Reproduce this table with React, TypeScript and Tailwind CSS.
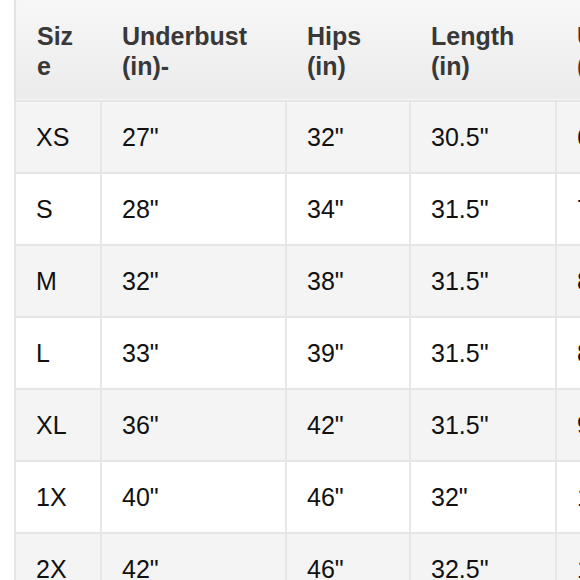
import React from "react";

const headers = [
    ["Siz", "e"],
    ["Underbust", "(in)-"],
    ["Hips", "(in)"],
    ["Length", "(in)"],
    ["Underarm", "(in)"],
];

const rows = [
    ["XS", '27"', '32"', '30.5"', '6"'],
    ["S", '28"', '34"', '31.5"', '7"'],
    ["M", '32"', '38"', '31.5"', '8"'],
    ["L", '33"', '39"', '31.5"', '8"'],
    ["XL", '36"', '42"', '31.5"', '9"'],
    ["1X", '40"', '46"', '32"', '10"'],
    ["2X", '42"', '46"', '32.5"', '10"'],
];

const colWidths = ["w-[86px]", "w-[185px]", "w-[124px]", "w-[146px]", "w-[160px]"];

const App: React.FC = () => {
    return (
        <div className="w-[580px] h-[580px] overflow-hidden bg-white pl-[14px]" style={{ fontFamily: '"Liberation Sans", Arial, sans-serif' }}>
            <table className="table-fixed border-collapse w-[701px] text-[25px]">
                <colgroup>
                    {colWidths.map((w, i) => (
                        <col key={i} className={w} />
                    ))}
                </colgroup>
                <thead>
                    <tr className="h-[101px] bg-gradient-to-b from-[#f7f7f7] to-[#ebebeb] border-l-2 border-b-2 border-[#e3e3e3]">
                        {headers.map((h, i) => (
                            <th key={i} className="text-left align-middle font-bold text-[#383838] leading-[30px] pl-[21px] pt-[2px]">
                                <div className="whitespace-nowrap">{h[0]}</div>
                                <div className="whitespace-nowrap">{h[1]}</div>
                            </th>
                        ))}
                    </tr>
                </thead>
                <tbody>
                    {rows.map((r, ri) => (
                        <tr key={ri} className={ri % 2 === 0 ? "h-[72px] bg-[#f4f4f4]" : "h-[72px] bg-white"}>
                            {r.map((c, ci) => (
                                <td key={ci} className="border-2 border-[#e6e6e6] pl-[20px] align-middle text-[#111] leading-none">
                                    {c}
                                </td>
                            ))}
                        </tr>
                    ))}
                </tbody>
            </table>
        </div>
    );
};

export default App;
